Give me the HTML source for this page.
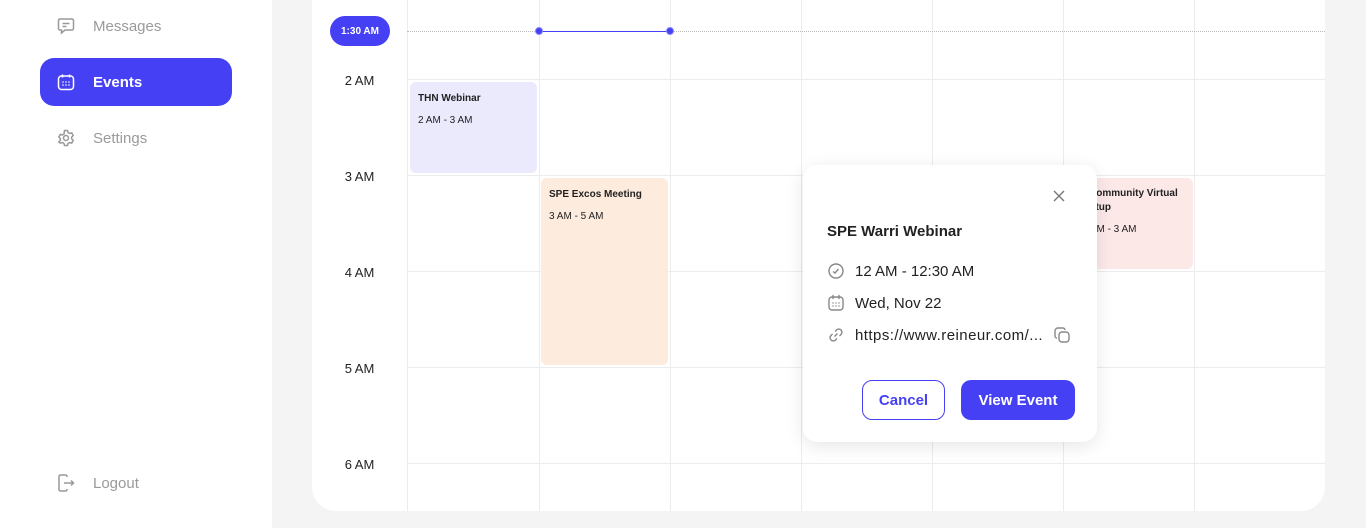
<!DOCTYPE html>
<html><head><style>
*{margin:0;padding:0;box-sizing:border-box}
body{width:1366px;height:528px;overflow:hidden;background:#f4f4f4;font-family:"Liberation Sans",sans-serif;position:relative}
.side{position:absolute;left:0;top:0;width:272px;height:528px;background:#fff}
.nav{position:absolute;left:40px;width:192px;height:48px;display:flex;align-items:center;padding-left:16px;font-size:15px;color:#9a9a9a}
.nav svg{margin-right:17px}
.nav.act{background:#4640f5;color:#fff;font-weight:bold;border-radius:14px}
.card{position:absolute;left:312px;top:-30px;width:1013px;height:541px;background:#fff;border-radius:0 0 24px 24px;overflow:hidden}
.abs{position:absolute}
.vl{position:absolute;top:0;bottom:0;width:1px;background:#ececec}
.hl{position:absolute;left:95px;right:0;height:1px;background:#ececec}
.tl{position:absolute;width:95px;text-align:center;font-size:13px;color:#222}
.ev{position:absolute;border-radius:6px;padding:11px 8px;font-size:10px;color:#222;white-space:nowrap;overflow:hidden}
.ev b{display:block;font-size:10px;margin-bottom:11px}
.pop{position:absolute;left:803px;top:165px;width:294px;height:277px;background:#fff;border-radius:14px;box-shadow:0 4px 18px rgba(0,0,0,.10)}
.row{position:absolute;left:24px;display:flex;align-items:center;font-size:15px;color:#222}
.row svg{margin-right:10px}
.btn{position:absolute;top:215px;height:40px;border-radius:10px;font-size:15px;font-weight:bold;display:flex;align-items:center;justify-content:center}
</style></head><body>
<div class="side">
 <div class="nav" style="top:2px"><svg width="20" height="20" viewBox="0 0 20 20" fill="none" stroke="#999" stroke-width="1.5"><path d="M4 3h12a1.5 1.5 0 0 1 1.5 1.5v8a1.5 1.5 0 0 1-1.5 1.5H9l-3.5 3v-3H4a1.5 1.5 0 0 1-1.5-1.5v-8A1.5 1.5 0 0 1 4 3z"/><path d="M6.5 7.5h7M6.5 10.5h4"/></svg>Messages</div>
 <div class="nav act" style="top:58px"><svg width="20" height="20" viewBox="0 0 20 20" fill="none" stroke="#fff" stroke-width="1.5"><rect x="2.5" y="4" width="15" height="13.5" rx="3"/><path d="M6.5 2.5v3M13.5 2.5v3"/><path d="M7 10h.01M10 10h.01M13 10h.01M7 13h.01M10 13h.01M13 13h.01" stroke-width="1.6" stroke-linecap="round"/></svg>Events</div>
 <div class="nav" style="top:114px"><svg width="20" height="20" viewBox="0 0 20 20" fill="none" stroke="#999" stroke-width="1.5"><circle cx="10" cy="10" r="2.5"/><path d="M8.5 2.5h3l.5 2 1.7 1 2-.6 1.5 2.6-1.5 1.5v2l1.5 1.5-1.5 2.6-2-.6-1.7 1-.5 2h-3l-.5-2-1.7-1-2 .6L2.8 14l1.5-1.5v-2L2.8 9l1.5-2.6 2 .6 1.7-1z"/></svg>Settings</div>
 <div class="nav" style="top:459px"><svg width="20" height="20" viewBox="0 0 20 20" fill="none" stroke="#999" stroke-width="1.5"><path d="M11 4V3.5A1.5 1.5 0 0 0 9.5 2h-5A1.5 1.5 0 0 0 3 3.5v13A1.5 1.5 0 0 0 4.5 18h5a1.5 1.5 0 0 0 1.5-1.5V16"/><path d="M8 10h9.5M15 7.5l2.5 2.5-2.5 2.5"/></svg>Logout</div>
</div>
<div class="card">
 <div class="vl" style="left:95px"></div><div class="vl" style="left:227px"></div><div class="vl" style="left:358px"></div><div class="vl" style="left:489px"></div><div class="vl" style="left:620px"></div><div class="vl" style="left:751px"></div><div class="vl" style="left:882px"></div>
 <div class="hl" style="top:109px"></div><div class="hl" style="top:205px"></div><div class="hl" style="top:301px"></div><div class="hl" style="top:397px"></div><div class="hl" style="top:493px"></div>
 <div class="tl" style="top:103px">2 AM</div><div class="tl" style="top:199px">3 AM</div><div class="tl" style="top:295px">4 AM</div><div class="tl" style="top:391px">5 AM</div><div class="tl" style="top:487px">6 AM</div>
 <div class="abs" style="left:95px;right:0;top:61px;border-top:1px dotted #bbb"></div>
 <div class="abs" style="left:227px;width:131px;top:61px;height:1px;background:#4640f5"></div>
 <div class="abs" style="left:223px;top:57px;width:8px;height:8px;border-radius:50%;background:#4640f5;border:1.5px solid #8c88ff"></div>
 <div class="abs" style="left:354px;top:57px;width:8px;height:8px;border-radius:50%;background:#4640f5;border:1.5px solid #8c88ff"></div>
 <div class="abs" style="left:18px;top:46px;width:60px;height:30px;border-radius:15px;background:#4640f5;color:#fff;font-size:10px;font-weight:bold;display:flex;align-items:center;justify-content:center">1:30 AM</div>
 <div class="ev" style="left:98px;top:112px;width:127px;height:91px;background:#ebeafd"><b>THN Webinar</b>2 AM - 3 AM</div>
 <div class="ev" style="left:229px;top:208px;width:127px;height:187px;background:#fdebdd"><b>SPE Excos Meeting</b>3 AM - 5 AM</div>
 <div class="ev" style="left:754px;top:208px;width:127px;height:91px;background:#fde8e8">
  <b class="abs" style="left:23px;top:10px;margin:0">Community Virtual</b>
  <b class="abs" style="left:10px;top:24px;margin:0">Meetup</b>
  <span class="abs" style="left:16px;top:46px">2 AM - 3 AM</span>
 </div>
</div>
<div class="pop">
 <svg class="abs" style="left:249px;top:24px" width="14" height="14" viewBox="0 0 14 14" stroke="#777" stroke-width="1.4"><path d="M2 2l10 10M12 2L2 12"/></svg>
 <div class="abs" style="left:24px;top:58px;font-size:15px;font-weight:bold;color:#222">SPE Warri Webinar</div>
 <div class="row" style="top:97px"><svg width="18" height="18" viewBox="0 0 18 18" fill="none" stroke="#888" stroke-width="1.4"><circle cx="9" cy="9" r="7"/><path d="M6 9.5l2 1.5 3.5-4"/></svg>12 AM - 12:30 AM</div>
 <div class="row" style="top:129px"><svg width="18" height="18" viewBox="0 0 18 18" fill="none" stroke="#888" stroke-width="1.4"><rect x="2" y="3" width="14" height="13" rx="3"/><path d="M6 1.5v3M12 1.5v3M6 9h.01M9 9h.01M12 9h.01M6 12h.01M9 12h.01M12 12h.01" stroke-linecap="round"/></svg>Wed, Nov 22</div>
 <div class="row" style="top:161px"><svg width="18" height="18" viewBox="0 0 18 18" fill="none" stroke="#888" stroke-width="1.4"><path d="M7.5 10.5l3-3M8 5.5l1.5-1.5a3 3 0 0 1 4.5 4.5L12.5 10M10 12.5L8.5 14A3 3 0 0 1 4 9.5L5.5 8"/></svg><span style="letter-spacing:.45px">https://www.reineur.com/...</span><svg style="margin-left:10px" width="18" height="18" viewBox="0 0 18 18" fill="none" stroke="#888" stroke-width="1.4"><rect x="6" y="6" width="10" height="10" rx="3"/><path d="M12 4a2 2 0 0 0-2-2H5a3 3 0 0 0-3 3v5a2 2 0 0 0 2 2"/></svg></div>
 <div class="btn" style="left:59px;width:83px;border:1.5px solid #4640f5;color:#4640f5">Cancel</div>
 <div class="btn" style="left:158px;width:114px;background:#4640f5;color:#fff">View Event</div>
</div>
</body></html>
